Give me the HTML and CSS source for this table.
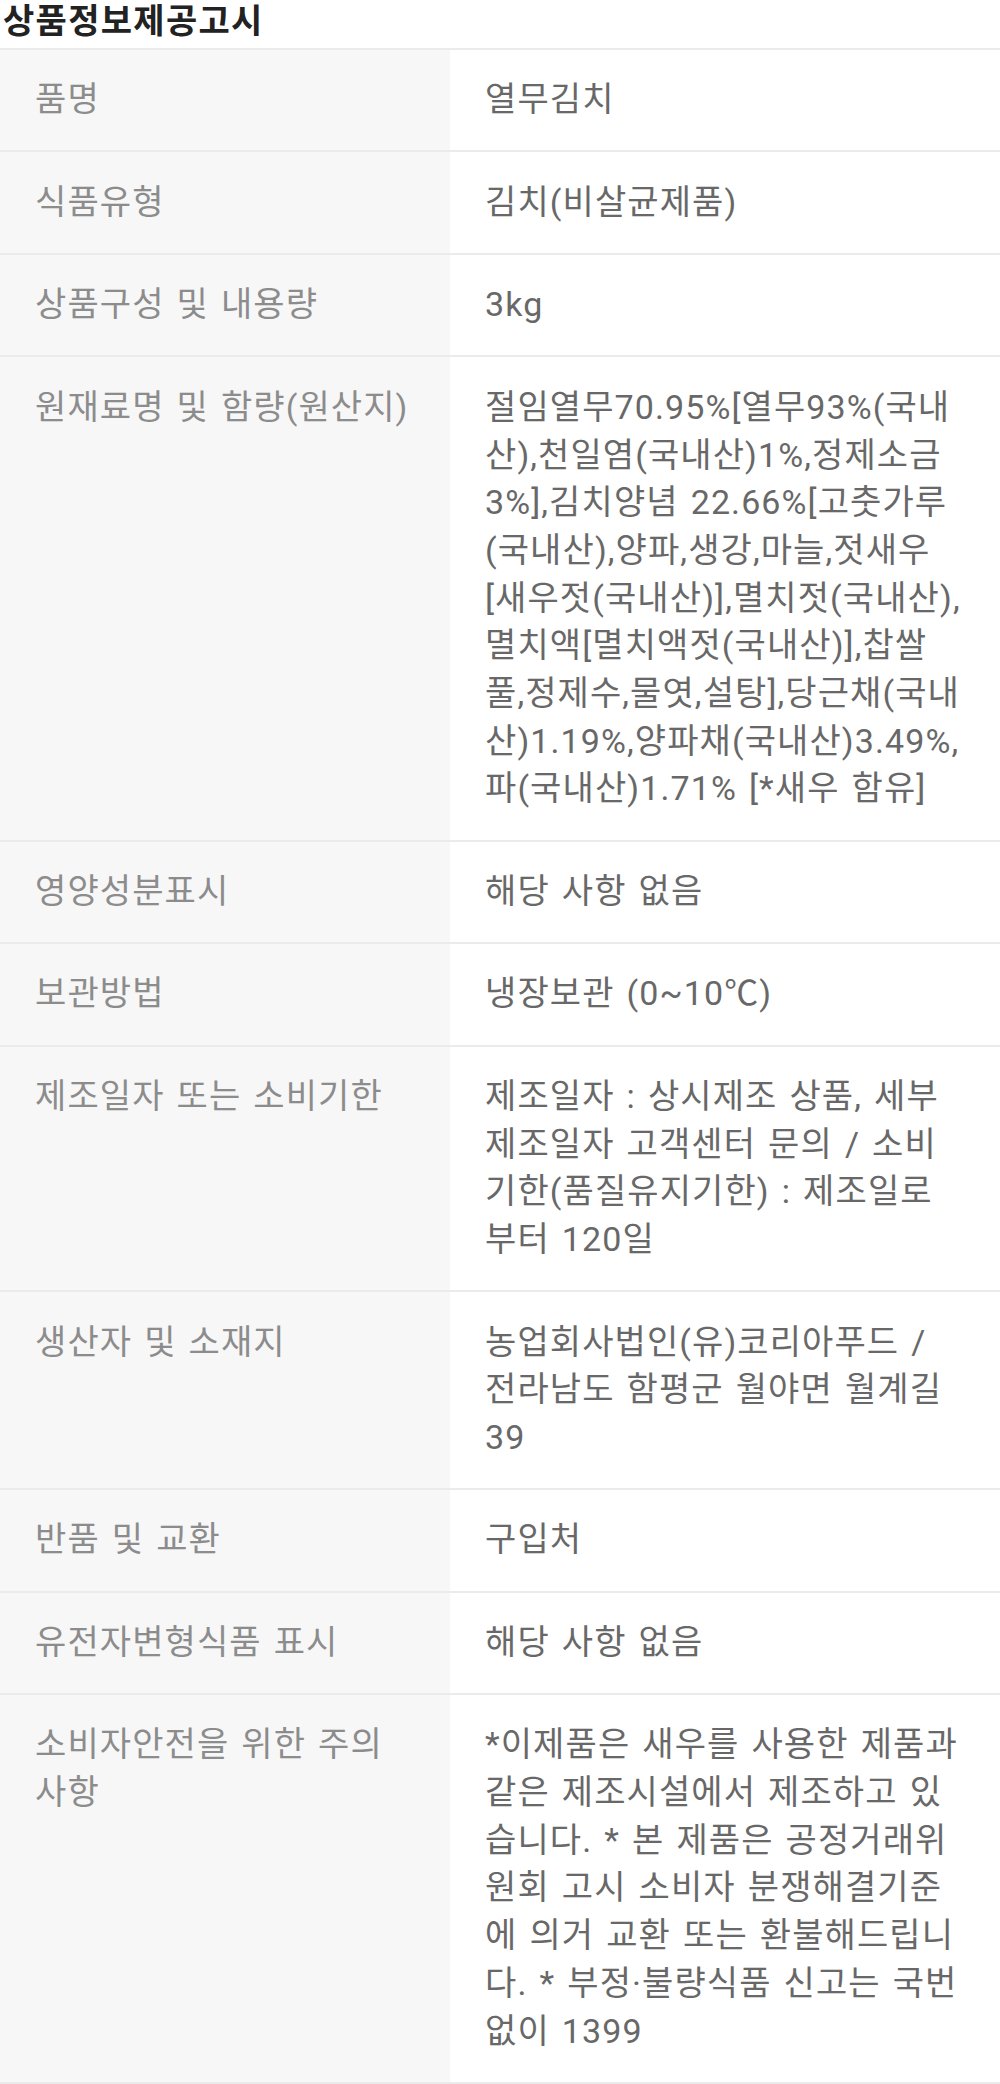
FILE: index.html
```html
<!DOCTYPE html>
<html lang="ko">
<head>
<meta charset="utf-8">
<title>상품정보제공고시</title>
<link rel="stylesheet" href="styles.css">
</head>
<body>
<h2 class="title">상품정보제공고시</h2>
<table class="info">
  <tr><th>품명</th><td>열무김치</td></tr>
  <tr><th>식품유형</th><td>김치(비살균제품)</td></tr>
  <tr><th>상품구성 및 내용량</th><td>3kg</td></tr>
  <tr><th>원재료명 및 함량(원산지)</th><td>절임열무70.95%[열무93%(국내<br>산),천일염(국내산)1%,정제소금<br>3%],김치양념 22.66%[고춧가루<br>(국내산),양파,생강,마늘,젓새우<br>[새우젓(국내산)],멸치젓(국내산),<br>멸치액[멸치액젓(국내산)],찹쌀<br>풀,정제수,물엿,설탕],당근채(국내<br>산)1.19%,양파채(국내산)3.49%,<br>파(국내산)1.71% [*새우 함유]</td></tr>
  <tr><th>영양성분표시</th><td>해당 사항 없음</td></tr>
  <tr><th>보관방법</th><td>냉장보관 (0~10℃)</td></tr>
  <tr><th>제조일자 또는 소비기한</th><td>제조일자 : 상시제조 상품, 세부<br>제조일자 고객센터 문의 / 소비<br>기한(품질유지기한) : 제조일로<br>부터 120일</td></tr>
  <tr><th>생산자 및 소재지</th><td>농업회사법인(유)코리아푸드 /<br>전라남도 함평군 월야면 월계길<br>39</td></tr>
  <tr><th>반품 및 교환</th><td>구입처</td></tr>
  <tr><th>유전자변형식품 표시</th><td>해당 사항 없음</td></tr>
  <tr><th>소비자안전을 위한 주의<br>사항</th><td>*이제품은 새우를 사용한 제품과<br>같은 제조시설에서 제조하고 있<br>습니다. * 본 제품은 공정거래위<br>원회 고시 소비자 분쟁해결기준<br>에 의거 교환 또는 환불해드립니<br>다. * 부정·불량식품 신고는 국번<br>없이 1399</td></tr>
</table>
</body>
</html>
```
FILE: styles.css
```css
html, body {
  margin: 0;
  padding: 0;
  background: #fff;
}
body {
  font-family: Roboto, "Noto Sans CJK KR", sans-serif;
  width: 1000px;
}
.title {
  margin: 0;
  padding: 1px 0 0 3px;
  height: 47px;
  font-family: Roboto, "Noto Sans CJK KR", sans-serif;
  font-size: 34px;
  line-height: 40px;
  font-weight: 700;
  color: #222;
  letter-spacing: 1.3px;
}
.info {
  width: 1000px;
  border-collapse: collapse;
  table-layout: fixed;
  border-top: 2px solid #ebebeb;
}
.info tr {
  border-bottom: 2px solid #ebebeb;
}
.info th,
.info td {
  vertical-align: top;
  text-align: left;
  font-size: 34px;
  line-height: 47.7px;
  font-weight: 400;
  letter-spacing: 1.1px;
  word-spacing: 2.5px;
  padding: 26.4px 20px 26.4px 35px;
  white-space: nowrap;
}
.info th {
  width: 395px;
  background: #f7f7f7;
  color: #8c8c8c;
}
.info td {
  color: #686868;
}
```
